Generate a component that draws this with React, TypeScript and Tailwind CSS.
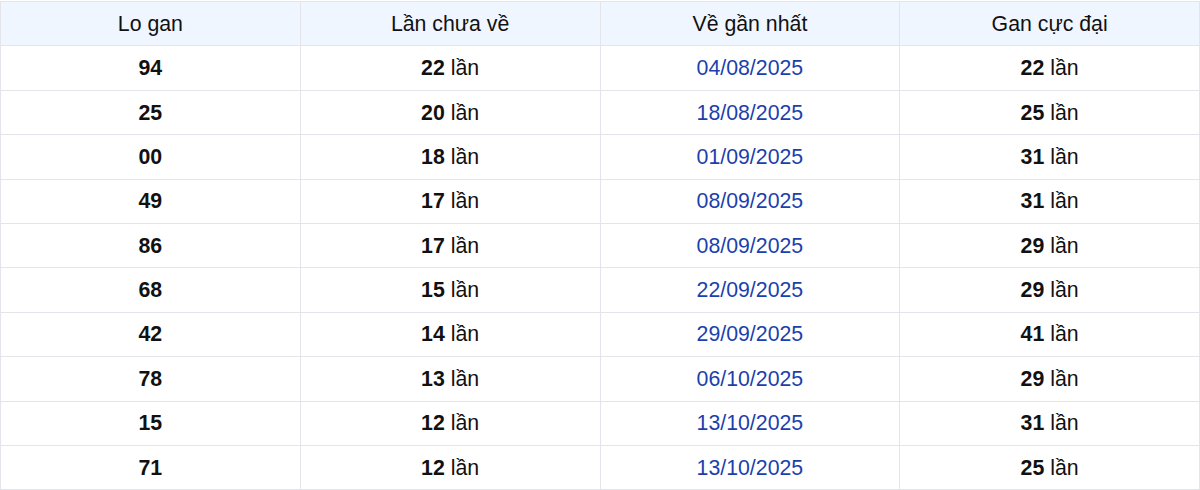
import React from "react";

type Row = {
  lo: string;
  chua: number;
  date: string;
  max: number;
};

const rows: Row[] = [
  { lo: "94", chua: 22, date: "04/08/2025", max: 22 },
  { lo: "25", chua: 20, date: "18/08/2025", max: 25 },
  { lo: "00", chua: 18, date: "01/09/2025", max: 31 },
  { lo: "49", chua: 17, date: "08/09/2025", max: 31 },
  { lo: "86", chua: 17, date: "08/09/2025", max: 29 },
  { lo: "68", chua: 15, date: "22/09/2025", max: 29 },
  { lo: "42", chua: 14, date: "29/09/2025", max: 41 },
  { lo: "78", chua: 13, date: "06/10/2025", max: 29 },
  { lo: "15", chua: 12, date: "13/10/2025", max: 31 },
  { lo: "71", chua: 12, date: "13/10/2025", max: 25 },
];

const headers = ["Lo gan", "Lần chưa về", "Về gần nhất", "Gan cực đại"];

const cell = "h-[44.4px] border border-[#e3e5ea] text-center p-0 pt-[2px]";

const App: React.FC = () => {
  return (
    <div
      className="w-[1200px] h-[490px] overflow-hidden bg-white pt-px"
      style={{ fontFamily: "'Liberation Sans', Arial, sans-serif" }}
    >
      <table className="w-full table-fixed border-collapse text-[21.3px] text-[#111]">
        <thead>
          <tr className="bg-[#eff6ff]">
            {headers.map((h) => (
              <th key={h} className={`${cell} font-normal`}>
                {h}
              </th>
            ))}
          </tr>
        </thead>
        <tbody>
          {rows.map((r, i) => (
            <tr key={i}>
              <td className={`${cell} font-bold`}>{r.lo}</td>
              <td className={cell}>
                <span className="font-bold">{r.chua}</span> lần
              </td>
              <td className={`${cell} text-[#1c3fae]`}>{r.date}</td>
              <td className={cell}>
                <span className="font-bold">{r.max}</span> lần
              </td>
            </tr>
          ))}
        </tbody>
      </table>
    </div>
  );
};

export default App;
